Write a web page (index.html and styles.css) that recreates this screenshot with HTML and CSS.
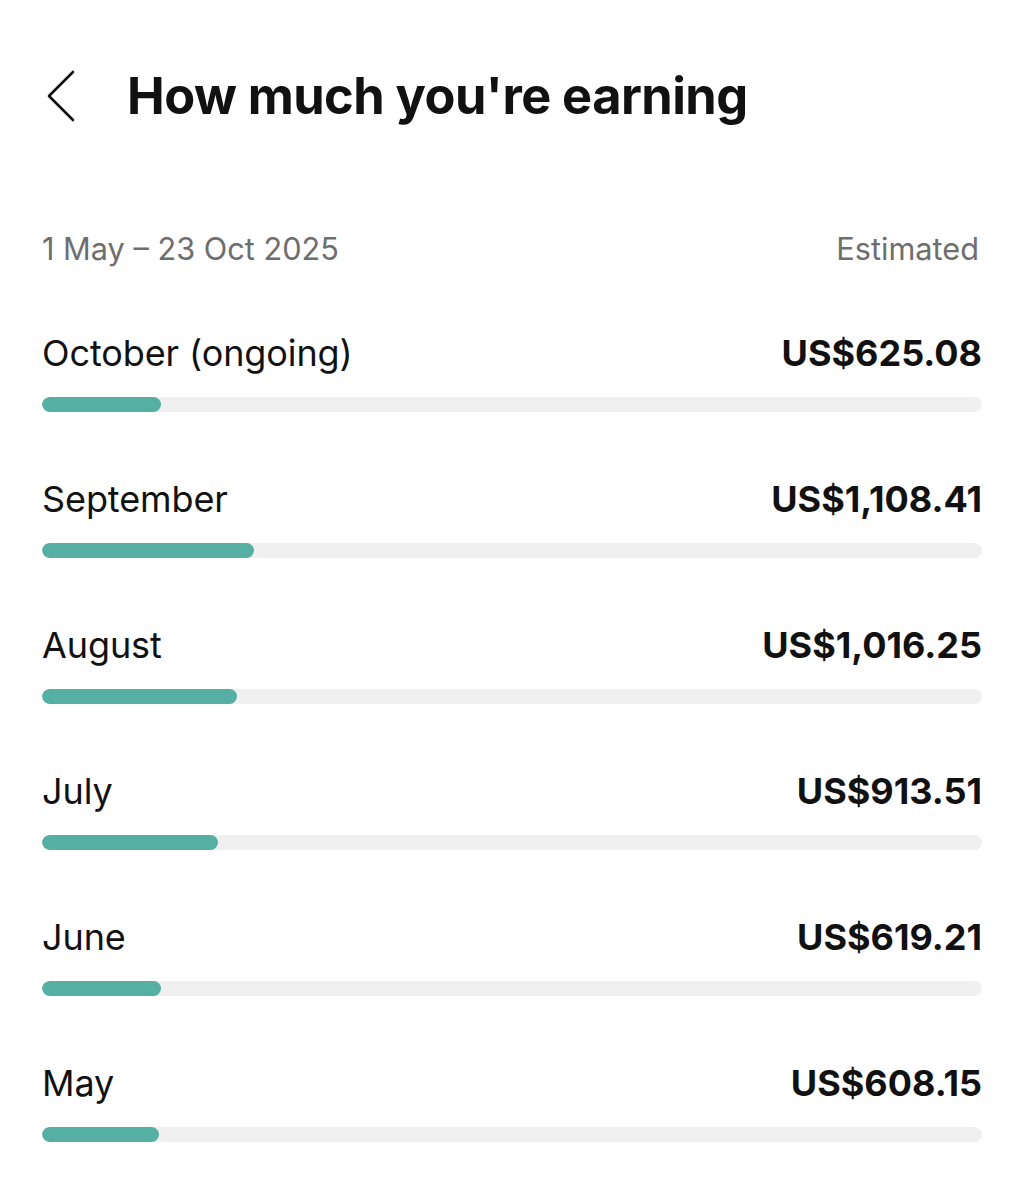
FILE: index.html
```html
<!DOCTYPE html>
<html lang="en">
<head>
    <meta charset="UTF-8">
    <meta name="viewport" content="width=device-width, initial-scale=1.0">
    <title>How much you're earning</title>
    <link rel="stylesheet" href="styles.css">
</head>
<body>

<div class="page">
    <header class="top-bar">
        <button class="back-btn" type="button" aria-label="Back">
            <svg width="34" height="54" viewBox="0 0 34 54">
                <path d="M29 3 L5 27 L29 51" fill="none" stroke="#111" stroke-width="2.6" stroke-linecap="round" stroke-linejoin="round"/>
            </svg>
        </button>
        <h1 class="title">How much you're earning</h1>
    </header>

    <div class="range-row">
        <span>1 May – 23 Oct 2025</span>
        <span>Estimated</span>
    </div>

    <ul class="months">
        <li class="month">
            <div class="month-head">
                <span class="month-name">October (ongoing)</span>
                <span class="month-amount">US$625.08</span>
            </div>
            <div class="track"><div class="fill" style="width: 12.7%"></div></div>
        </li>
        <li class="month">
            <div class="month-head">
                <span class="month-name">September</span>
                <span class="month-amount">US$1,108.41</span>
            </div>
            <div class="track"><div class="fill" style="width: 22.6%"></div></div>
        </li>
        <li class="month">
            <div class="month-head">
                <span class="month-name">August</span>
                <span class="month-amount">US$1,016.25</span>
            </div>
            <div class="track"><div class="fill" style="width: 20.7%"></div></div>
        </li>
        <li class="month">
            <div class="month-head">
                <span class="month-name">July</span>
                <span class="month-amount">US$913.51</span>
            </div>
            <div class="track"><div class="fill" style="width: 18.7%"></div></div>
        </li>
        <li class="month">
            <div class="month-head">
                <span class="month-name">June</span>
                <span class="month-amount">US$619.21</span>
            </div>
            <div class="track"><div class="fill" style="width: 12.7%"></div></div>
        </li>
        <li class="month">
            <div class="month-head">
                <span class="month-name">May</span>
                <span class="month-amount">US$608.15</span>
            </div>
            <div class="track"><div class="fill" style="width: 12.4%"></div></div>
        </li>
    </ul>
</div>

</body>
</html>
```

FILE: styles.css
```css
body {
    margin: 0;
    background: #ffffff;
    font-family: Inter, "Liberation Sans", sans-serif;
    color: #111111;
}

.page {
    padding: 0 42px 0 42px;
}

.top-bar {
    display: flex;
    align-items: center;
    height: 192px;
}

.back-btn {
    border: none;
    background: none;
    padding: 0;
    margin-left: 2px;
    width: 83px;
    display: flex;
    cursor: pointer;
}

.title {
    margin: 0;
    font-size: 50.5px;
    font-weight: 700;
    letter-spacing: -0.55px;
    line-height: 60px;
}

.range-row {
    display: flex;
    justify-content: space-between;
    font-size: 30.7px;
    line-height: 40px;
    color: #6e6e6e;
    margin-top: 37px;
    padding-right: 3px;
}

.months {
    list-style: none;
    margin: 0;
    padding: 0;
}

.month {
    margin-top: 62px;
}

.month + .month {
    margin-top: 65px;
}

.month-head {
    display: flex;
    justify-content: space-between;
    align-items: baseline;
    font-size: 36px;
    line-height: 44px;
}

.month-name {
    letter-spacing: -0.1px;
}

.month-amount {
    font-weight: 700;
}

.track {
    margin-top: 22px;
    height: 15px;
    border-radius: 8px;
    background: #f0f0f0;
    overflow: hidden;
}

.fill {
    height: 100%;
    border-radius: 8px;
    background: #55b0a3;
}
```
